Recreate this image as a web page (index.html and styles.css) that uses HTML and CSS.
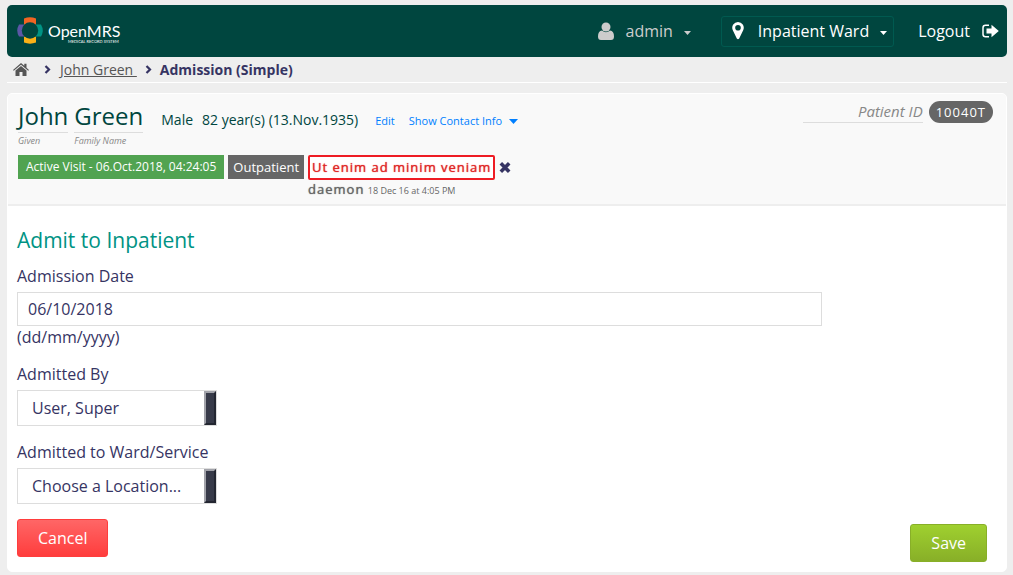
FILE: index.html
```html
<!DOCTYPE html>
<html lang="en">
<head>
<meta charset="utf-8">
<title>Admission (Simple)</title>
<link rel="stylesheet" href="styles.css">
</head>
<body>
<header class="topbar">
  <a class="logo" href="#" aria-label="OpenMRS">
    <svg width="110" height="30" viewBox="0 0 110 30">
      <path d="M7 9V2.500Q13 .2 19 2.500V9Z" fill="#f26522"/>
      <path d="M7 20V26.500Q13 28.800 19 26.500V20Z" fill="#fbb117"/>
      <path d="M8 8.500H2Q-1.500 14.500 2 20.500H8Z" fill="#5b57a6"/>
      <path d="M18 8.500H24Q27.500 14.500 24 20.500H18Z" fill="#009384"/>
      <circle cx="13" cy="14.500" r="8.200" fill="#00463f"/>
      <text class="logo-name" x="31" y="21">OpenMRS</text>
      <text class="logo-tag" x="51" y="27">MEDICAL RECORD SYSTEM</text>
    </svg>
  </a>
  <nav class="usernav">
    <button class="account" type="button">
      <svg width="16" height="18" viewBox="0 0 16 18" fill="currentColor"><circle cx="8" cy="5" r="4.500"/><path d="M4 8.500Q8 12 12 8.500Q16 9 16 14.500Q16 18 13 18H3Q0 18 0 14.500Q0 9 4 8.500Z"/></svg>
      <span>admin</span>
      <svg class="caret" width="7" height="4" viewBox="0 0 7 4" fill="currentColor"><path d="M0 0H7L3.500 4Z"/></svg>
    </button>
    <button class="location" type="button">
      <svg width="12" height="18" viewBox="0 0 12 18" fill="currentColor"><path fill-rule="evenodd" d="M6 0A5.800 5.800 0 0 1 11.300 8L7.200 16.500Q6 18 4.800 16.500L.7 8A5.800 5.800 0 0 1 6 0ZM6 3A2.800 2.800 0 1 0 6 8.600A2.800 2.800 0 1 0 6 3Z"/></svg>
      <span>Inpatient Ward</span>
      <svg class="caret" width="7" height="4" viewBox="0 0 7 4" fill="currentColor"><path d="M0 0H7L3.500 4Z"/></svg>
    </button>
    <a class="logout" href="#">Logout
      <svg width="17" height="15" viewBox="0 0 17 15"><path d="M7 1.200H3.500Q1 1.200 1 3.700V10.300Q1 12.800 3.500 12.800H7" fill="none" stroke="currentColor" stroke-width="1.500"/><path d="M4.500 4.500H9.500V.8L16.800 7L9.500 13.300V9.500H4.500Z" fill="currentColor"/></svg>
    </a>
  </nav>
</header>

<nav class="breadcrumbs" aria-label="Breadcrumb">
  <a class="home" href="#" aria-label="Home"><svg width="16" height="13" viewBox="0 0 16 13" fill="currentColor"><path d="M8 0L11.300 2.800V.8H13.500V4.700L16 6.900L15.200 7.800L8 1.800L.8 7.800L0 6.900Z"/><path d="M8 3L13.500 7.500V13H9.500V9H6.500V13H2.500V7.500Z"/></svg></a>
  <svg class="chevron" width="7" height="9" viewBox="0 0 7 9"><path d="M1.500 1L5 4.500L1.500 8" fill="none" stroke="currentColor" stroke-width="2.200"/></svg>
  <a class="crumb" href="#">John Green&nbsp;</a>
  <svg class="chevron" width="7" height="9" viewBox="0 0 7 9"><path d="M1.500 1L5 4.500L1.500 8" fill="none" stroke="currentColor" stroke-width="2.200"/></svg>
  <span class="current">Admission (Simple)</span>
</nav>

<main class="panel">
  <section class="patient">
    <div class="identity">
      <h1 class="name"><span class="part">John<em>Given</em></span><span class="part">Green<em>Family Name</em></span></h1>
      <div class="demographics">
        <span>Male</span>
        <span>82 year(s) (13.Nov.1935)</span>
        <a class="edit" href="#">Edit</a>
        <a class="contact" href="#">Show Contact Info <svg width="9" height="5" viewBox="0 0 9 5" fill="currentColor"><path d="M0 0H9L4.500 5Z"/></svg></a>
      </div>
      <div class="ids"><em>Patient ID</em><span class="pid">10040T</span></div>
    </div>
    <div class="tags">
      <span class="tag visit">Active Visit - 06.Oct.2018, 04:24:05</span>
      <span class="tag">Outpatient</span>
      <div class="note">
        <div class="note-row">
          <span class="note-text">Ut enim ad minim veniam</span>
          <button class="remove" type="button" aria-label="Remove note"><svg width="12" height="11" viewBox="0 0 12 11"><path d="M1.800 1.300L10.200 9.700M10.200 1.300L1.800 9.700" stroke="currentColor" stroke-width="3.600"/></svg></button>
        </div>
        <div class="note-meta"><strong>daemon</strong> <small>18 Dec 16 at 4:05 PM</small></div>
      </div>
    </div>
  </section>

  <form class="form">
    <h2>Admit to Inpatient</h2>
    <div class="field">
      <label for="date">Admission Date</label>
      <input id="date" type="text" value="06/10/2018">
      <span>(dd/mm/yyyy)</span>
    </div>
    <div class="field">
      <label for="by">Admitted By</label>
      <div class="select"><select id="by"><option>User, Super</option></select></div>
    </div>
    <div class="field">
      <label for="ward">Admitted to Ward/Service</label>
      <div class="select"><select id="ward"><option>Choose a Location...</option></select></div>
    </div>
    <div class="actions">
      <button class="btn cancel" type="button">Cancel</button>
      <button class="btn save" type="submit">Save</button>
    </div>
  </form>
</main>
</body>
</html>
```
FILE: styles.css
```css
*, *::after { box-sizing: border-box; }

body {
  margin: 0;
  padding: 5px 6px 3px 7px;
  background: #eee;
  color: #363463;
  font: 16px/22px "Open Sans", sans-serif;
}

button, input, select { font: inherit; color: inherit; }
svg { display: block; flex: none; }

.topbar {
  display: flex;
  justify-content: space-between;
  align-items: center;
  height: 52px;
  padding: 0 8px 0 10px;
  border-radius: 5px;
  background: #00463f;
  color: #fff;
}
.logo { color: #fff; }
.logo-name { font: 16px Lato, sans-serif; fill: #fff; }
.logo-tag { font: 4px Lato, sans-serif; fill: #fff; }

.usernav { display: flex; align-items: center; }
.usernav button {
  display: flex;
  align-items: center;
  padding: 0;
  border: 0;
  background: none;
}
.usernav .caret { margin: 4px 0 0 11px; }
.usernav .account { margin-right: 30px; color: #ccc; }
.account span { margin-left: 11px; }
.usernav .location {
  height: 31px;
  margin-right: 24px;
  padding: 0 6px 0 10px;
  border: 1px solid #005a50;
  border-radius: 3px;
}
.location span { margin-left: 14px; }
.logout {
  display: flex;
  align-items: center;
  gap: 12px;
  color: #fff;
  text-decoration: none;
}

.breadcrumbs {
  display: flex;
  align-items: center;
  height: 26px;
  padding-left: 6px;
  border-bottom: 1px solid #fff;
  font-size: 14px;
}
.breadcrumbs a { color: #555; }
.home { margin-right: 15px; }
.crumb { margin: 0 8px 0 9px; }
.current { margin-left: 8px; font-weight: 700; }

.panel {
  margin-top: 10px;
  border: 1px solid #fff;
  border-radius: 5px;
  background: #fff;
  overflow: hidden;
}

.patient {
  height: 112px;
  padding: 7px 13px 0 10px;
  border-bottom: 2px solid #eee;
  background: #f9f9f9;
}
.identity { display: flex; align-items: flex-start; }
.name {
  display: flex;
  gap: 6px;
  margin: 0;
  color: #00463f;
  font-size: 24px;
  font-weight: 400;
  line-height: 29px;
}
.name em {
  display: block;
  margin-top: 2px;
  border-top: 1px solid #ddd;
  color: #888;
  font-size: 9px;
  line-height: 16px;
}
.demographics {
  display: flex;
  align-items: baseline;
  gap: 9px;
  margin: 8px 0 0 18px;
  color: #00463f;
  font-size: 14px;
}
.demographics a {
  color: #007fff;
  font-size: 11px;
  text-decoration: none;
}
.demographics .edit { margin: 0 5px 0 8px; }
.contact { display: flex; align-items: center; gap: 7px; }
.ids { display: flex; gap: 6px; margin-left: auto; }
.ids em {
  width: 120px;
  border-bottom: 1px solid #ddd;
  color: #888;
  font-size: 15px;
  line-height: 21px;
  text-align: right;
}
.pid {
  padding: 0 7px;
  border-radius: 11px;
  background: #666;
  color: #fff;
  font-size: 13px;
  letter-spacing: 1px;
}

.tags { display: flex; align-items: flex-start; gap: 4px; margin-top: 6px; }
.tag {
  padding: 0 5px;
  background: #666;
  color: #fff;
  font-size: 13px;
  line-height: 24px;
}
.tags .visit { padding: 0 8px; background: #51a351; font-size: 12px; }
.note-row { display: flex; align-items: center; gap: 4px; }
.note-text {
  padding: 0 2px;
  border: 2px solid #ee1c24;
  border-radius: 2px;
  background: #fff;
  color: #e02828;
  font-size: 13px;
  letter-spacing: 1px;
  line-height: 21px;
  text-shadow: 0 0 1px currentColor;
}
.remove { padding: 0; border: 0; background: none; }
.note-meta { color: #666; font-size: 13px; line-height: 18px; }
.note-meta strong {
  font-weight: 400;
  letter-spacing: 1px;
  text-shadow: 0 0 1px currentColor;
}
.note-meta small { font-size: 9px; }

.form { padding: 23px 19px 9px 9px; }
.form h2 {
  margin: 0 0 14px;
  color: #009384;
  font-size: 21px;
  font-weight: 400;
  line-height: 22px;
}
.field { margin-bottom: 15px; }
.field label { display: block; margin-bottom: 5px; }
.field span { display: block; }
.field input {
  display: block;
  width: 83%;
  height: 34px;
  padding: 0 10px;
  border: 1px solid #ddd;
  background: #fff;
}
.select {
  display: flex;
  width: 200px;
  height: 36px;
  border: 1px solid #ddd;
}
.select::after {
  content: "";
  width: 12px;
  border: 2px solid;
  border-color: #a2a3aa #232631 #232631 #a2a3aa;
  background: #373a49;
}
.select select {
  flex: 1;
  min-width: 0;
  padding: 0 14px;
  border: 0;
  background: #fff;
  appearance: none;
}
.actions { display: flex; justify-content: space-between; }
.btn {
  height: 38px;
  padding: 0 20px;
  border: 1px solid #ff3d3d;
  border-radius: 3px;
  color: #fff;
}
.cancel { background: linear-gradient(#ff6666, #ff3d3d); }
.save {
  margin-top: 5px;
  border-color: #88af28;
  background: linear-gradient(#9fd02f, #88af28);
}
```
